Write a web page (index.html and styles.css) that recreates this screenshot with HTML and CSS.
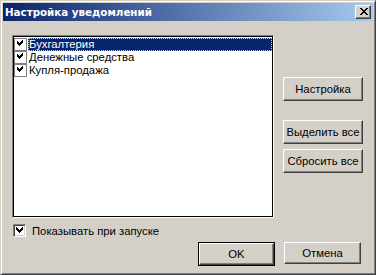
FILE: index.html
```html
<!DOCTYPE html>
<html>
<head>
<meta charset="utf-8">
<link rel="stylesheet" href="styles.css">
</head>
<body>
<div class="window">
  <div class="titlebar">
    <span class="title">Настройка уведомлений</span>
    <span class="close">
      <svg width="8" height="7" viewBox="0 0 8 7" shape-rendering="crispEdges"><path d="M0 0h2v1h-2zM6 0h2v1h-2zM1 1h2v1h-2zM5 1h2v1h-2zM2 2h4v1h-4zM3 3h2v1h-2zM2 4h4v1h-4zM1 5h2v1h-2zM5 5h2v1h-2zM0 6h2v1h-2zM6 6h2v1h-2z" fill="#000"/></svg>
    </span>
  </div>
  <div class="client">
    <div class="main">
      <div class="listframe">
        <div class="list">
          <div class="item">
            <span class="cb small"><svg width="11" height="11" viewBox="0 0 11 11" shape-rendering="crispEdges"><path d="M7 1h1v3h-1zM6 2h1v3h-1zM5 3h1v3h-1zM4 4h1v3h-1zM3 3h1v3h-1zM2 2h1v3h-1z" fill="#000"/></svg></span>
            <span class="label sel">Бухгалтерия</span>
          </div>
          <div class="item">
            <span class="cb small"><svg width="11" height="11" viewBox="0 0 11 11" shape-rendering="crispEdges"><path d="M7 1h1v3h-1zM6 2h1v3h-1zM5 3h1v3h-1zM4 4h1v3h-1zM3 3h1v3h-1zM2 2h1v3h-1z" fill="#000"/></svg></span>
            <span class="label">Денежные средства</span>
          </div>
          <div class="item">
            <span class="cb small"><svg width="11" height="11" viewBox="0 0 11 11" shape-rendering="crispEdges"><path d="M7 1h1v3h-1zM6 2h1v3h-1zM5 3h1v3h-1zM4 4h1v3h-1zM3 3h1v3h-1zM2 2h1v3h-1z" fill="#000"/></svg></span>
            <span class="label">Купля-продажа</span>
          </div>
        </div>
      </div>
      <div class="side">
        <button class="btn b-setup">Настройка</button>
        <button class="btn b-all">Выделить все</button>
        <button class="btn b-reset">Сбросить все</button>
      </div>
    </div>
    <label class="startup">
      <span class="cb big"><svg width="9" height="9" viewBox="0 0 9 9" shape-rendering="crispEdges"><path d="M7 1h1v3h-1zM6 2h1v3h-1zM5 3h1v3h-1zM4 4h1v3h-1zM3 3h1v3h-1zM2 2h1v3h-1zM1 1h1v3h-1z" fill="#000"/></svg></span>
      <span>Показывать при запуске</span>
    </label>
    <div class="footer">
      <span class="default"><button class="btn b-ok">OK</button></span>
      <button class="btn b-cancel">Отмена</button>
    </div>
  </div>
</div>
</body>
</html>
```
FILE: styles.css
```css
html, body {
  margin: 0;
  padding: 0;
  background: #d4d0c8;
}
body {
  font-family: "Liberation Sans", Arial, sans-serif;
  font-size: 11px;
  color: #000;
}
.window {
  width: 376px;
  height: 275px;
  box-sizing: border-box;
  border: 1px solid;
  border-color: #d4d0c8 #404040 #404040 #d4d0c8;
  box-shadow: inset 1px 1px 0 #fff, inset -1px -1px 0 #808080;
  padding: 2px;
  background: #d4d0c8;
  display: flex;
  flex-direction: column;
}
.titlebar {
  height: 18px;
  background: linear-gradient(to right, #0a246a, #a6caf0);
  display: flex;
  align-items: center;
  justify-content: space-between;
  padding: 0 2px 0 2px;
}
.title {
  color: #fff;
  font-family: "DejaVu Sans", sans-serif;
  font-weight: bold;
  font-size: 10.3px;
}
.close {
  width: 16px;
  height: 14px;
  box-sizing: border-box;
  background: #d4d0c8;
  border: 1px solid;
  border-color: #fff #404040 #404040 #fff;
  box-shadow: inset -1px -1px 0 #808080;
  display: flex;
  align-items: center;
  justify-content: center;
  padding: 0 0 1px 1px;
}
.close svg { display: block; }
.client {
  flex: 1;
  padding: 14px 0 0 9px;
}
.main {
  display: flex;
  gap: 9px;
}
.listframe {
  width: 262px;
  height: 183px;
  box-sizing: border-box;
  border: 1px solid;
  border-color: #808080 #fff #fff #808080;
}
.list {
  height: 100%;
  box-sizing: border-box;
  border: 1px solid #000;
  background: #fff;
  padding-top: 1px;
}
.item {
  height: 13px;
  display: flex;
  align-items: center;
}
.cb {
  display: inline-flex;
  align-items: center;
  justify-content: center;
  box-sizing: border-box;
  background: #fff;
}
.cb svg { display: block; }
.cb.small {
  width: 13px;
  height: 13px;
  border: 1px solid #808080;
}
.label {
  flex: 1;
  height: 13px;
  line-height: 13px;
  padding-left: 1px;
  margin-left: 1px;
  font-size: 11.3px;
}
.label.sel {
  background: #0a246a;
  color: #fff;
  outline: 1px dotted #d4d0c8;
  outline-offset: -1px;
}
.side {
  display: flex;
  flex-direction: column;
  padding-top: 42px;
}
.btn {
  font-family: "Liberation Sans", Arial, sans-serif;
  font-size: 11.3px;
  color: #000;
  background: #d4d0c8;
  box-sizing: border-box;
  border: 1px solid;
  border-color: #fff #404040 #404040 #fff;
  box-shadow: inset -1px -1px 0 #808080;
  padding: 0;
  margin: 0;
  height: 24px;
  width: 80px;
}
.b-all { margin-top: 19px; }
.b-reset { margin-top: 5px; }
.startup {
  display: flex;
  align-items: center;
  gap: 6px;
  margin-top: 6px;
  margin-left: 1px;
  height: 13px;
  font-size: 11.3px;
}
.cb.big {
  width: 13px;
  height: 13px;
  border: 1px solid;
  border-color: #808080 #fff #fff #808080;
  box-shadow: inset 1px 1px 0 #404040, inset -1px -1px 0 #d4d0c8;
}
.footer {
  display: flex;
  justify-content: flex-end;
  gap: 9px;
  margin-top: 5px;
  padding-right: 12px;
}
.default {
  border: 1px solid #000;
  display: flex;
}
.b-ok {
  width: 75px;
  height: 22px;
}
.b-cancel {
  width: 77px;
  height: 22px;
}
```
